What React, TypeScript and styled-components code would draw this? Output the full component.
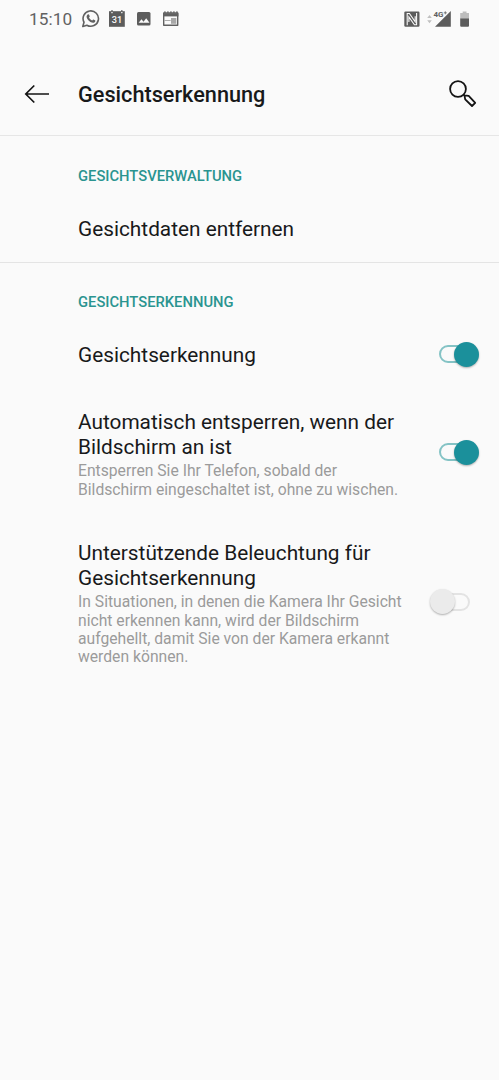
import React from "react";
import styled, { createGlobalStyle } from "styled-components";

const GlobalStyle = createGlobalStyle`
  * { box-sizing: border-box; }
  body {
    margin: 0;
    background: #fafafa;
    font-family: Roboto, sans-serif;
    color: #18191a;
  }
`;

const Screen = styled.div`
  min-height: 1080px;
  background: #fafafa;
`;

const StatusBar = styled.div`
  height: 38px;
  padding: 0 28px 0 29px;
  display: flex;
  align-items: center;
  justify-content: space-between;
  color: #616161;
`;

const StatusGroup = styled.div`
  display: flex;
  align-items: center;
  svg { display: block; }
`;

const Clock = styled.span`
  width: 53px;
  font-size: 17.2px;
  line-height: 20px;
  letter-spacing: 0.1px;
`;

const Header = styled.header`
  height: 98px;
  padding: 15px 22px 0 24px;
  display: flex;
  align-items: center;
  border-bottom: 1px solid #e6e6e6;
  svg { display: block; }
`;

const Title = styled.h1`
  margin: 0 auto 0 29px;
  padding-top: 1px;
  font-size: 21.7px;
  line-height: 28px;
  font-weight: 500;
  white-space: nowrap;
`;

const Section = styled.section<{ $divided?: boolean }>`
  border-bottom: ${(p) => (p.$divided ? "1px solid #e4e4e4" : "none")};
`;

const SectionLabel = styled.h2<{ $top: number }>`
  margin: 0;
  height: 60px;
  padding: ${(p) => p.$top}px 0 0 78px;
  font-size: 14.75px;
  line-height: 20px;
  font-weight: 500;
  color: #2a9490;
  white-space: nowrap;
`;

const Row = styled.div<{ $switchEnd?: number; $height: number }>`
  height: ${(p) => p.$height}px;
  padding: 0 ${(p) => p.$switchEnd ?? 20}px 0 78px;
  display: flex;
  align-items: center;
  justify-content: space-between;
`;

const RowBody = styled.div`
  padding-top: 2px;
`;

const RowTitle = styled.div`
  font-size: 20.8px;
  line-height: 24.5px;
  white-space: pre;
`;

const RowText = styled.div`
  margin-top: 3px;
  font-size: 15.7px;
  line-height: 18.4px;
  color: #9b9b9b;
  white-space: pre;
`;

const Switch = styled.div<{ $on: boolean }>`
  flex: none;
  width: 40px;
  height: 25px;
  margin-bottom: 3px;
  display: flex;
  align-items: center;
  justify-content: ${(p) => (p.$on ? "flex-end" : "flex-start")};
`;

const Track = styled.div<{ $on: boolean }>`
  width: 30px;
  height: 18px;
  flex: none;
  order: ${(p) => (p.$on ? 0 : 1)};
  margin: ${(p) => (p.$on ? "0 -15px 0 0" : "0 0 0 -15px")};
  border: 2px solid ${(p) => (p.$on ? "#84c3c5" : "#e3e3e3")};
  border-radius: 9px;
`;

const Thumb = styled.div<{ $on: boolean }>`
  width: 25px;
  height: 25px;
  flex: none;
  z-index: 1;
  border-radius: 50%;
  background: ${(p) => (p.$on ? "#1b909b" : "#ebebeb")};
  box-shadow: 0 1px 2px rgba(0, 0, 0, 0.3);
`;

const Toggle = ({ on }: { on: boolean }) => (
  <Switch role="switch" aria-checked={on} $on={on}>
    <Track $on={on} />
    <Thumb $on={on} />
  </Switch>
);

const StatusIcons = () => (
  <svg width="97" height="20" viewBox="0 0 97 20" fill="none">
    <path d="M.8 17.5 2 13.2A7.7 7.7 0 1 1 4.9 16.2Z" stroke="#616161" strokeWidth="1.6" strokeLinejoin="round" />
    <path d="M5.7 5.6c.5-.5 1.1-.4 1.4.2l.6 1.4c.1.4-.4 1-.7 1.3.7 1.4 1.7 2.3 3.2 2.9.4-.3.8-1.1 1.2-1l1.6.8c.6.3.3 1.5-.3 2-1.2.9-2.6.6-4.3-.3-1.7-1-3.2-2.7-3.7-4.4-.3-1.1.2-2.3 1-2.9Z" fill="#616161" />
    <path d="M27 2.2h15.8v15.6H27Z" fill="#5c5c5c" />
    <path d="M29.2 1.2h1.6v1.6h-1.6ZM39 1.2h1.6v1.6H39Z" fill="#5c5c5c" />
    <path d="M29.2 3.7h1.6M39 3.7h1.6" stroke="#fafafa" strokeWidth="1" />
    <text x="34.9" y="14.2" textAnchor="middle" fontFamily="Roboto, sans-serif" fontSize="9.2" fontWeight="500" fill="#fafafa">31</text>
    <rect x="55" y="3" width="13.5" height="13.5" rx="1.5" fill="#5c5c5c" />
    <path d="m56.6 13.8 2.9-3.5 2 2.4 2.7-3.5 3.3 4.6Z" fill="#fafafa" />
    <path d="M81.7 4h14v12.2h-14Z" stroke="#616161" strokeWidth="1.4" strokeLinejoin="round" />
    <path d="M81 4.2h15.4v3.2H81Z" fill="#616161" />
    <path d="M82 3.2h14" stroke="#616161" strokeWidth="1.2" strokeDasharray="1.8 1.2" />
    <path d="M89 9h5.3v5.8H89Z" fill="#a8a8a8" />
    <path d="M82.5 11.5h6.2" stroke="#999" strokeWidth=".8" />
  </svg>
);

const SignalIcons = () => (
  <svg width="67" height="22" viewBox="0 0 67 22" fill="none">
    <rect x=".3" y="3.5" width="15.2" height="15.2" rx="1.2" fill="#5c5c5c" />
    <path d="M3.2 17.2V5.5h2.2l5.8 8.3V8.2M12.6 5v11.7h-2.2L4.9 8.9V14" stroke="#fafafa" strokeWidth="1.1" />
    <path d="m23.2 10.1 2.3-3 2.3 3ZM23.2 12.3l2.3 3 2.3-3Z" fill="#c0c0c0" />
    <text x="29.5" y="9" fontFamily="Roboto, sans-serif" fontSize="8" fontWeight="700" fill="#616161">4G</text>
    <path d="M39.8 4.8h3M41.3 3.3v3" stroke="#616161" strokeWidth=".8" />
    <path d="M31 18.7 46.8 3v15.7Z" fill="#5c5c5c" />
    <path d="M56.2 5h2.5V3.4h3.8V5H65v6h-8.8Z" fill="#bdbdbd" />
    <path d="M56.2 10.5H65v7.2q0 1-1 1h-6.8q-1 0-1-1Z" fill="#5c5c5c" />
  </svg>
);

const BackIcon = () => (
  <svg width="25" height="20" viewBox="0 0 25 20" fill="none" stroke="#141414" strokeWidth="1.7">
    <path d="M25 10H1.8M10.3 1.5 1.8 10l8.5 8.5" />
  </svg>
);

const SearchIcon = () => (
  <svg width="28" height="28" viewBox="0 0 28 28" fill="none" stroke="#141414" strokeWidth="1.8" strokeLinejoin="round">
    <circle cx="9" cy="9" r="7.9" />
    <path d="m14.6 14.6 1 1M15.4 15.4l4.3.4 6.5 7-3.2 3.2-6.8-6.6Z" />
  </svg>
);

export default function App() {
  return (
    <>
      <GlobalStyle />
      <Screen>
        <StatusBar>
          <StatusGroup>
            <Clock>15:10</Clock>
            <StatusIcons />
          </StatusGroup>
          <StatusGroup>
            <SignalIcons />
          </StatusGroup>
        </StatusBar>
        <Header>
          <BackIcon />
          <Title>Gesichtserkennung</Title>
          <SearchIcon />
        </Header>
        <Section $divided>
          <SectionLabel $top={30}>GESICHTSVERWALTUNG</SectionLabel>
          <Row $height={66}>
            <RowTitle>Gesichtdaten entfernen</RowTitle>
          </Row>
        </Section>
        <Section>
          <SectionLabel $top={29}>GESICHTSERKENNUNG</SectionLabel>
          <Row $height={65}>
            <RowTitle>Gesichtserkennung</RowTitle>
            <Toggle on />
          </Row>
          <Row $height={131}>
            <RowBody>
              <RowTitle>{"Automatisch entsperren, wenn der\nBildschirm an ist"}</RowTitle>
              <RowText>{"Entsperren Sie Ihr Telefon, sobald der\nBildschirm eingeschaltet ist, ohne zu wischen."}</RowText>
            </RowBody>
            <Toggle on />
          </Row>
          <Row $height={168} $switchEnd={29}>
            <RowBody>
              <RowTitle>{"Unterstützende Beleuchtung für\nGesichtserkennung"}</RowTitle>
              <RowText>{"In Situationen, in denen die Kamera Ihr Gesicht\nnicht erkennen kann, wird der Bildschirm\naufgehellt, damit Sie von der Kamera erkannt\nwerden können."}</RowText>
            </RowBody>
            <Toggle on={false} />
          </Row>
        </Section>
      </Screen>
    </>
  );
}
